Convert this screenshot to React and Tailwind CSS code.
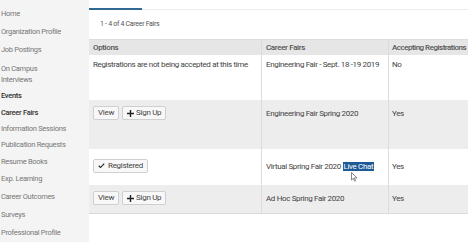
import React from "react";

const Plus = () => (
  <svg width="7" height="7" viewBox="0 0 10 10" className="mr-[2px]">
    <path d="M4 0h2v4h4v2H6v4H4V6H0V4h4z" fill="#222" />
  </svg>
);
const Check = () => (
  <svg width="7" height="6" viewBox="0 0 10 8" className="mr-[3px]">
    <path d="M0.5 4.2 L3.6 7.3 L9.5 1.2 L8.3 0.1 L3.6 4.9 L1.7 3 Z" fill="#222" />
  </svg>
);

const Btn = ({ children }) => (
  <div className="flex items-center h-[14px] px-[4px] border border-[#cfcfcf] bg-[#f8f8f8] rounded-[2px] text-[8px] tracking-[-0.3px] text-[#444] leading-none">
    {children}
  </div>
);

export default function App() {
  const side = [
    ["Home", "h-[18px]"],
    ["Organization Profile", "h-[18px]"],
    ["Job Postings", "h-[18px]"],
  ];
  const side2 = [
    ["Information Sessions", "h-[14px]"],
    ["Publication Requests", "h-[18px]"],
    ["Resume Books", "h-[16px]"],
    ["Exp. Learning", "h-[18px]"],
    ["Career Outcomes", "h-[18px]"],
    ["Surveys", "h-[18px]"],
    ["Professional Profile", "h-[18px]"],
  ];
  return (
    <div
      className="flex w-[468px] h-[242px] overflow-hidden bg-white"
      style={{ fontFamily: "Roboto, 'Noto Sans', sans-serif" }}
    >
      <div className="w-[89px] shrink-0 bg-[#f4f4f4] pt-[5px] text-[7.5px] tracking-[-0.3px] text-[#777] pl-[1px]">
        {side.map(([t, h]) => (
          <div key={t} className={`${h} flex items-center`}>{t}</div>
        ))}
        <div className="h-[29px] flex flex-col justify-center leading-[11px]">
          <div>On Campus</div>
          <div>Interviews</div>
        </div>
        <div className="h-[16px] flex items-center font-medium text-[#333]">Events</div>
        <div className="h-[18px] flex items-center font-medium text-[#333]">Career Fairs</div>
        {side2.map(([t, h]) => (
          <div key={t} className={`${h} flex items-center`}>{t}</div>
        ))}
      </div>
      <div className="flex-1 flex flex-col">
        <div className="h-[10px] flex">
          <div className="w-[53px] border-b-2 border-[#2f6a95]" />
          <div className="flex-1 border-b border-[#ececec]" />
        </div>
        <div className="h-[29px] flex items-center pl-[11px] pb-[1px] text-[7px] tracking-[-0.3px] text-[#555]">
          1 - 4 of 4 Career Fairs
        </div>
        <div className="grid grid-cols-[172px_127px_1fr] text-[8px] tracking-[-0.35px] text-[#444]">
          <div className="h-[16px] bg-[#e6e6e6] border-t border-[#dcdcdc] flex items-center pl-[4px] font-medium text-[#555]">Options</div>
          <div className="h-[16px] bg-[#e6e6e6] border-t border-l border-[#dcdcdc] flex items-center pl-[4px] font-medium text-[#555]">Career Fairs</div>
          <div className="h-[16px] bg-[#e6e6e6] border-t border-l border-[#dcdcdc] flex items-center pl-[3px] font-medium text-[#555] whitespace-nowrap tracking-[-0.5px]">Accepting Registrations</div>

          <div className="h-[45px] bg-white pl-[4px] pt-[4px] whitespace-nowrap">Registrations are not being accepted at this time</div>
          <div className="h-[45px] bg-white border-l border-[#dcdcdc] pl-[4px] pt-[4px] whitespace-nowrap">Engineering Fair - Sept. 18 -19 2019</div>
          <div className="h-[45px] bg-white border-l border-[#dcdcdc] pl-[3px] pt-[4px]">No</div>

          <div className="h-[49px] bg-[#ededed] pl-[4px] pt-[6px] flex items-start gap-[3px]">
            <Btn>View</Btn>
            <Btn><Plus />Sign Up</Btn>
          </div>
          <div className="h-[49px] bg-[#ededed] border-l border-[#dcdcdc] pl-[4px] pt-[8px]">Engineering Fair Spring 2020</div>
          <div className="h-[49px] bg-[#ededed] border-l border-[#dcdcdc] pl-[3px] pt-[8px]">Yes</div>

          <div className="h-[36px] bg-white pl-[4px] pt-[10px] flex items-start">
            <Btn><Check />Registered</Btn>
          </div>
          <div className="h-[36px] bg-white border-l border-[#dcdcdc] pl-[4px] pt-[12px] relative whitespace-nowrap">
            Virtual Spring Fair 2020 <span className="bg-[#1d5a96] text-white px-[1px]">Live Chat</span>
            <svg width="7" height="10" viewBox="0 0 7 10" className="absolute left-[89px] top-[23px]">
              <path d="M0.5 0.5 L0.5 8 L2.3 6.3 L3.5 9.2 L4.6 8.7 L3.4 5.9 L6 5.9 Z" fill="white" stroke="#555" strokeWidth="0.7" />
            </svg>
          </div>
          <div className="h-[36px] bg-white border-l border-[#dcdcdc] pl-[3px] pt-[12px]">Yes</div>

          <div className="h-[29px] bg-[#ededed] border-b border-[#d8d8d8] pl-[4px] pt-[6px] flex items-start gap-[3px]">
            <Btn>View</Btn>
            <Btn><Plus />Sign Up</Btn>
          </div>
          <div className="h-[29px] bg-[#ededed] border-b border-l border-[#dcdcdc] pl-[4px] pt-[8px]">Ad Hoc Spring Fair 2020</div>
          <div className="h-[29px] bg-[#ededed] border-b border-l border-[#dcdcdc] pl-[3px] pt-[8px]">Yes</div>
        </div>
      </div>
    </div>
  );
}
